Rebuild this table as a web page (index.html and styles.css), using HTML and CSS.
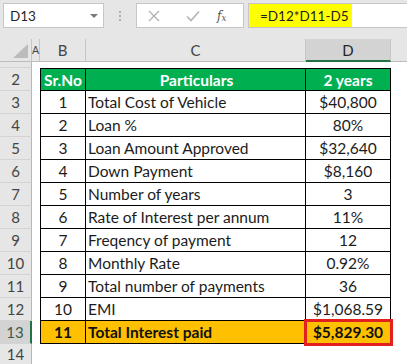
FILE: index.html
```html
<!DOCTYPE html>
<html>
<head>
<meta charset="utf-8">
<link rel="stylesheet" href="styles.css">
</head>
<body>
<div class="app">
  <div class="toolbar">
    <div class="namebox">
      <span class="name">D13</span>
      <span class="drop"></span>
    </div>
    <div class="dots"><i></i><i></i><i></i></div>
    <div class="buttons">
      <svg class="ico" width="12" height="12" viewBox="0 0 12 12"><path d="M1 1 L11 11 M11 1 L1 11" stroke="#b3b3b3" stroke-width="1.4" fill="none"/></svg>
      <svg class="ico" width="14" height="12" viewBox="0 0 14 12"><path d="M1 6.5 L5 10.5 L13 1.5" stroke="#b3b3b3" stroke-width="1.6" fill="none"/></svg>
      <span class="fx">f<sub>x</sub></span>
    </div>
    <div class="formula"><span class="hl">=D12*D11-D5</span></div>
  </div>
  <table class="sheet">
    <colgroup>
      <col class="c-rh"><col class="c-a"><col class="c-b"><col class="c-c"><col class="c-d"><col class="c-e">
    </colgroup>
    <tr class="colhead">
      <td class="corner"><svg width="32" height="22" viewBox="0 0 32 22"><polygon points="13,19 28,19 28,5" fill="#bcbcbc"/></svg></td>
      <td class="ch cha">A</td>
      <td class="ch">B</td>
      <td class="ch">C</td>
      <td class="ch sel">D</td>
      <td class="ch last"></td>
    </tr>
    <tr class="r1">
      <td class="rh"></td><td></td><td></td><td></td><td></td><td></td>
    </tr>
    <tr class="row">
      <td class="rh">2</td><td></td>
      <td class="cell b top head">Sr.No</td>
      <td class="cell c top head ctr">Particulars</td>
      <td class="cell d top head">2 years</td>
      <td></td>
    </tr>
    <tr class="row">
      <td class="rh">3</td><td></td>
      <td class="cell b">1</td><td class="cell c">Total Cost of Vehicle</td><td class="cell d">$40,800</td><td></td>
    </tr>
    <tr class="row">
      <td class="rh">4</td><td></td>
      <td class="cell b">2</td><td class="cell c">Loan %</td><td class="cell d">80%</td><td></td>
    </tr>
    <tr class="row">
      <td class="rh">5</td><td></td>
      <td class="cell b">3</td><td class="cell c">Loan Amount Approved</td><td class="cell d">$32,640</td><td></td>
    </tr>
    <tr class="row">
      <td class="rh">6</td><td></td>
      <td class="cell b">4</td><td class="cell c">Down Payment</td><td class="cell d">$8,160</td><td></td>
    </tr>
    <tr class="row">
      <td class="rh">7</td><td></td>
      <td class="cell b">5</td><td class="cell c">Number of years</td><td class="cell d">3</td><td></td>
    </tr>
    <tr class="row">
      <td class="rh">8</td><td></td>
      <td class="cell b">6</td><td class="cell c">Rate of Interest per annum</td><td class="cell d">11%</td><td></td>
    </tr>
    <tr class="row">
      <td class="rh">9</td><td></td>
      <td class="cell b">7</td><td class="cell c">Freqency of payment</td><td class="cell d">12</td><td></td>
    </tr>
    <tr class="row">
      <td class="rh">10</td><td></td>
      <td class="cell b">8</td><td class="cell c">Monthly Rate</td><td class="cell d">0.92%</td><td></td>
    </tr>
    <tr class="row">
      <td class="rh">11</td><td></td>
      <td class="cell b">9</td><td class="cell c">Total number of payments</td><td class="cell d">36</td><td></td>
    </tr>
    <tr class="row">
      <td class="rh">12</td><td></td>
      <td class="cell b">10</td><td class="cell c">EMI</td><td class="cell d">$1,068.59</td><td></td>
    </tr>
    <tr class="row">
      <td class="rh rsel">13</td><td></td>
      <td class="cell b total">11</td><td class="cell c total">Total Interest paid</td><td class="cell d total active">$5,829.30</td><td></td>
    </tr>
    <tr class="r14">
      <td class="rh">14</td><td></td><td></td><td></td><td></td><td></td>
    </tr>
  </table>
</div>
</body>
</html>
```

FILE: styles.css
```css
* { box-sizing: border-box; }
html, body { margin: 0; padding: 0; }
body {
  width: 407px;
  height: 364px;
  overflow: hidden;
  background: #ffffff;
  font-family: Lato, "Liberation Sans", sans-serif;
}
.app { width: 407px; }

.toolbar {
  display: flex;
  align-items: center;
  height: 39px;
  padding: 3px 0 11px 3px;
  background: #e6e6e6;
}
.namebox {
  width: 101px;
  height: 25px;
  background: #fff;
  border: 1px solid #c6c6c6;
  display: flex;
  align-items: center;
  justify-content: space-between;
  padding: 0 5px 0 6px;
}
.name { font-size: 13.5px; color: #262626; }
.drop {
  width: 0; height: 0;
  border-left: 4px solid transparent;
  border-right: 4px solid transparent;
  border-top: 4px solid #7a7a7a;
}
.dots {
  width: 32px;
  display: flex;
  flex-direction: column;
  align-items: center;
  gap: 2px;
}
.dots i { display: block; width: 2px; height: 2px; background: #b0b0b0; }
.buttons {
  width: 108px;
  height: 25px;
  background: #fff;
  border: 1px solid #c6c6c6;
  display: flex;
  align-items: center;
  padding-left: 11px;
}
.buttons .ico { display: block; }
.buttons .ico + .ico { margin-left: 26px; }
.fx {
  margin-left: 17px;
  font-family: "DejaVu Serif", "Liberation Serif", serif;
  font-style: italic;
  font-size: 12px;
  color: #555;
}
.fx sub { font-size: 8.5px; vertical-align: -1px; }
.formula {
  flex: 1;
  height: 25px;
  margin-left: 4px;
  margin-right: -3px;
  background: #fff;
  border: 1px solid #c6c6c6;
  display: flex;
}
.hl {
  background: #ffff00;
  width: 103px;
  height: 100%;
  padding-left: 11px;
  display: flex;
  align-items: center;
  font-size: 13.5px;
  color: #1e1e1e;
}

.sheet {
  border-collapse: separate;
  border-spacing: 0;
  table-layout: fixed;
  width: 407px;
}
.c-rh { width: 32px; }
.c-a { width: 8px; }
.c-b { width: 46px; }
.c-c { width: 220px; }
.c-d { width: 85px; }
.c-e { width: 16px; }
.sheet td {
  padding: 0;
  overflow: hidden;
  white-space: nowrap;
  font-size: 15.5px;
  color: #1c1c1c;
}

.colhead td {
  height: 22px;
  background: #e6e6e6;
  border-right: 1px solid #c6c6c6;
  border-bottom: 1px solid #bdbdbd;
  text-align: center;
  color: #444;
  font-size: 15px;
  vertical-align: middle;
}
.colhead .corner { padding: 0; line-height: 0; }
.colhead .corner svg { display: block; }
.colhead .last { border-right: none; }
.colhead .sel {
  background: #d3d3d3;
  border-bottom: 2px solid #217346;
  color: #262626;
}
.sheet .colhead td.cha {
  font-size: 10.5px;
  text-align: left;
  overflow: visible;
}

.r1 td { height: 6px; }
.row td { height: 23px; }
.r14 td { height: 21px; }

.rh {
  background: #e6e6e6;
  border-right: 1px solid #b7b7b7;
  border-bottom: 1px solid #d4d4d4;
  text-align: center;
  color: #444;
}
.sheet td.rh { font-size: 15px; color: #444; }
.r1 .rh { border-bottom: 1px solid #d4d4d4; }
.rsel {
  background: #d3d3d3;
  border-right: 2px solid #217346;
}
.sheet td.rsel { color: #3c5a48; }

.cell {
  border-right: 1px solid #000;
  border-bottom: 1px solid #000;
  vertical-align: middle;
}
.cell.b { border-left: 1px solid #000; text-align: center; }
.cell.c { padding-left: 2px; }
.cell.d { text-align: center; }
.cell.top { border-top: 1px solid #000; }
.sheet td.head {
  background: #00b050;
  color: #ffffff;
  font-weight: 700;
}
.cell.ctr { text-align: center; }
.sheet td.total {
  background: #ffc000;
  font-weight: 700;
  color: #111;
}
.active {
  outline: 3px solid #e32020;
  outline-offset: -1px;
}
```
